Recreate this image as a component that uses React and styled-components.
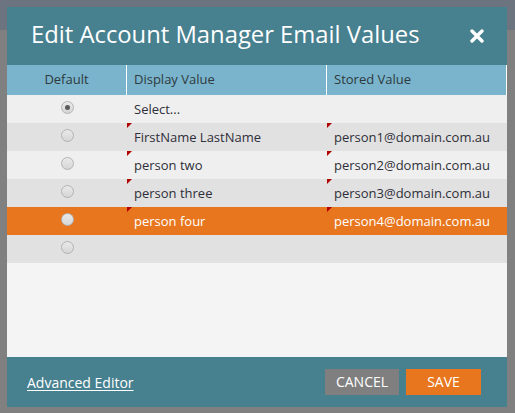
import React from "react";
import styled, { createGlobalStyle } from "styled-components";

const Global = createGlobalStyle`
  html, body { margin: 0; padding: 0; }
  body {
    width: 515px;
    height: 413px;
    overflow: hidden;
    background: linear-gradient(to bottom, #6c7480 0, #6c7480 30px, #808080 30px, #808080 100%);
    font-family: "Open Sans", "Noto Sans", sans-serif;
  }
`;

const Page = styled.div`
  padding: 7px;
`;

const Dialog = styled.div`
  width: 500px;
  height: 400px;
  display: flex;
  flex-direction: column;
  background: #f4f4f4;
`;

const Header = styled.div`
  height: 58px;
  background: #47808f;
  display: flex;
  align-items: center;
  justify-content: space-between;
  padding: 0 23px 0 24px;
  box-sizing: border-box;
`;

const Title = styled.h1`
  margin: 0;
  font-size: 23.8px;
  font-weight: 400;
  color: #fff;
  letter-spacing: 0;
  line-height: 1;
  padding-bottom: 2px;
`;

const Close = styled.button`
  border: 0;
  background: none;
  padding: 0;
  width: 14px;
  height: 14px;
  display: flex;
  cursor: pointer;
`;

const Grid = styled.div`
  display: grid;
  grid-template-columns: 120px 200px 180px;
`;

const HeadCell = styled.div`
  height: 30px;
  background: #7ab4cc;
  border-right: 1px solid #fff;
  color: #2d3a40;
  font-size: 13px;
  display: flex;
  align-items: center;
  justify-content: ${(p) => (p.$center ? "center" : "flex-start")};
  padding-left: ${(p) => (p.$center ? "0" : "7px")};
  padding-bottom: 2px;
  box-sizing: border-box;
`;

const Cell = styled.div`
  position: relative;
  height: 28px;
  background: ${(p) => (p.$selected ? "#e8761e" : p.$odd ? "#e1e1e1" : "#efefef")};
  color: ${(p) => (p.$selected ? "#fff" : "#2f2f3a")};
  font-size: 13px;
  display: flex;
  align-items: center;
  justify-content: ${(p) => (p.$center ? "center" : "flex-start")};
  padding-left: ${(p) => (p.$center ? "0" : "7px")};
  box-sizing: border-box;
  white-space: nowrap;
`;

const Flag = styled.span`
  position: absolute;
  left: 0;
  top: 0;
  width: 0;
  height: 0;
  border-top: 5px solid #b00000;
  border-right: 5px solid transparent;
`;

const Radio = styled.span`
  width: 11px;
  height: 11px;
  border-radius: 50%;
  border: 1px solid #b3b3b3;
  background: linear-gradient(to bottom, #e9e9e9, #d6d6d6);
  display: flex;
  align-items: center;
  justify-content: center;
  margin-bottom: 3px;
  &::after {
    content: "";
    width: 5px;
    height: 5px;
    border-radius: 50%;
    background: ${(p) => (p.$checked ? "#5a5a5a" : "transparent")};
  }
`;

const Spacer = styled.div`
  flex: 1;
`;

const Footer = styled.div`
  height: 50px;
  background: #47808f;
  display: flex;
  align-items: center;
  padding: 0 26px 0 20px;
  box-sizing: border-box;
`;

const Link = styled.a`
  color: #fff;
  font-size: 14px;
  text-decoration: underline;
  text-underline-offset: 2px;
  margin-top: 1px;
  cursor: pointer;
`;

const Buttons = styled.div`
  margin-left: auto;
  display: flex;
  gap: 7px;
  margin-top: -1px;
`;

const Button = styled.button`
  height: 26px;
  width: ${(p) => p.$w}px;
  border: 0;
  background: ${(p) => (p.$primary ? "#e8761e" : "#7f7f7f")};
  color: #fff;
  font-family: "Open Sans", "Noto Sans", sans-serif;
  font-size: 14px;
  padding: 0 0 1px;
  cursor: pointer;
`;

const rows = [
  { display: "Select...", stored: "", checked: true, flag: false },
  { display: "FirstName LastName", stored: "person1@domain.com.au", flag: true },
  { display: "person two", stored: "person2@domain.com.au", flag: true },
  { display: "person three", stored: "person3@domain.com.au", flag: true },
  { display: "person four", stored: "person4@domain.com.au", flag: true, selected: true },
  { display: "", stored: "", flag: false },
];

export default function App() {
  return (
    <Page>
      <Global />
      <Dialog>
        <Header>
          <Title>Edit Account Manager Email Values</Title>
          <Close aria-label="Close">
            <svg width="14" height="14" viewBox="0 0 14 14">
              <path d="M2 2 L12 12 M12 2 L2 12" stroke="#fff" strokeWidth="3.4" strokeLinecap="round" />
            </svg>
          </Close>
        </Header>
        <Grid>
          <HeadCell $center>Default</HeadCell>
          <HeadCell>Display Value</HeadCell>
          <HeadCell>Stored Value</HeadCell>
          {rows.map((r, i) => (
            <React.Fragment key={i}>
              <Cell $center $odd={i % 2 === 1} $selected={r.selected}>
                <Radio $checked={r.checked} />
              </Cell>
              <Cell $odd={i % 2 === 1} $selected={r.selected}>
                {r.flag && <Flag />}
                {r.display}
              </Cell>
              <Cell $odd={i % 2 === 1} $selected={r.selected}>
                {r.flag && <Flag />}
                {r.stored}
              </Cell>
            </React.Fragment>
          ))}
        </Grid>
        <Spacer />
        <Footer>
          <Link>Advanced Editor</Link>
          <Buttons>
            <Button $w={74}>CANCEL</Button>
            <Button $w={75} $primary>SAVE</Button>
          </Buttons>
        </Footer>
      </Dialog>
    </Page>
  );
}
